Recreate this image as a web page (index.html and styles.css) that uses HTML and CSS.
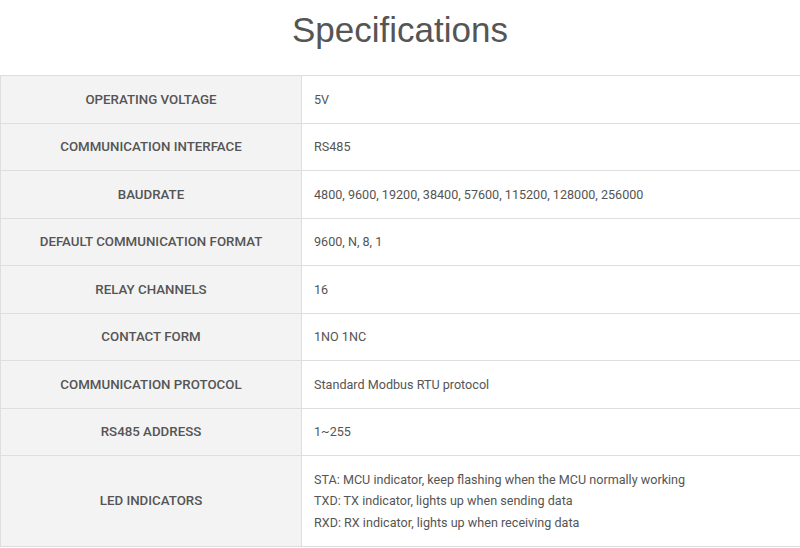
FILE: index.html
```html
<!DOCTYPE html>
<html>
<head>
<meta charset="utf-8">
<link rel="stylesheet" href="styles.css">
</head>
<body>
<h1 class="title">Specifications</h1>
<table class="specs">
<tbody>
<tr><th>OPERATING VOLTAGE</th><td>5V</td></tr>
<tr><th>COMMUNICATION INTERFACE</th><td>RS485</td></tr>
<tr><th>BAUDRATE</th><td>4800, 9600, 19200, 38400, 57600, 115200, 128000, 256000</td></tr>
<tr><th>DEFAULT COMMUNICATION FORMAT</th><td>9600, N, 8, 1</td></tr>
<tr><th>RELAY CHANNELS</th><td>16</td></tr>
<tr><th>CONTACT FORM</th><td>1NO 1NC</td></tr>
<tr><th>COMMUNICATION PROTOCOL</th><td>Standard Modbus RTU protocol</td></tr>
<tr><th>RS485 ADDRESS</th><td>1~255</td></tr>
<tr><th>LED INDICATORS</th><td><div>STA: MCU indicator, keep flashing when the MCU normally working</div><div>TXD: TX indicator, lights up when sending data</div><div>RXD: RX indicator, lights up when receiving data</div></td></tr>
</tbody>
</table>
</body>
</html>
```
FILE: styles.css
```css
html, body {
  margin: 0;
  padding: 0;
  background: #fff;
  overflow: hidden;
}
.title {
  margin: 0;
  height: 75px;
  box-sizing: border-box;
  padding-top: 9px;
  font-family: "Liberation Sans", Arial, sans-serif;
  font-weight: normal;
  font-size: 35px;
  line-height: 42px;
  color: #555;
  text-align: center;
}
.specs {
  width: 100%;
  border-collapse: collapse;
  font-family: Roboto, "Liberation Sans", sans-serif;
  font-size: 12.6px;
  color: #555;
}
.specs th, .specs td {
  border: 1px solid #dedede;
  padding: 12.5px 13px;
  line-height: 21.5px;
  vertical-align: middle;
}
.specs th {
  width: 274px;
  background: #f3f3f3;
  font-size: 13.3px;
  font-weight: 500;
  text-align: center;
}
.specs td {
  padding-left: 12px;
  text-align: left;
  border-right: none;
}
```
